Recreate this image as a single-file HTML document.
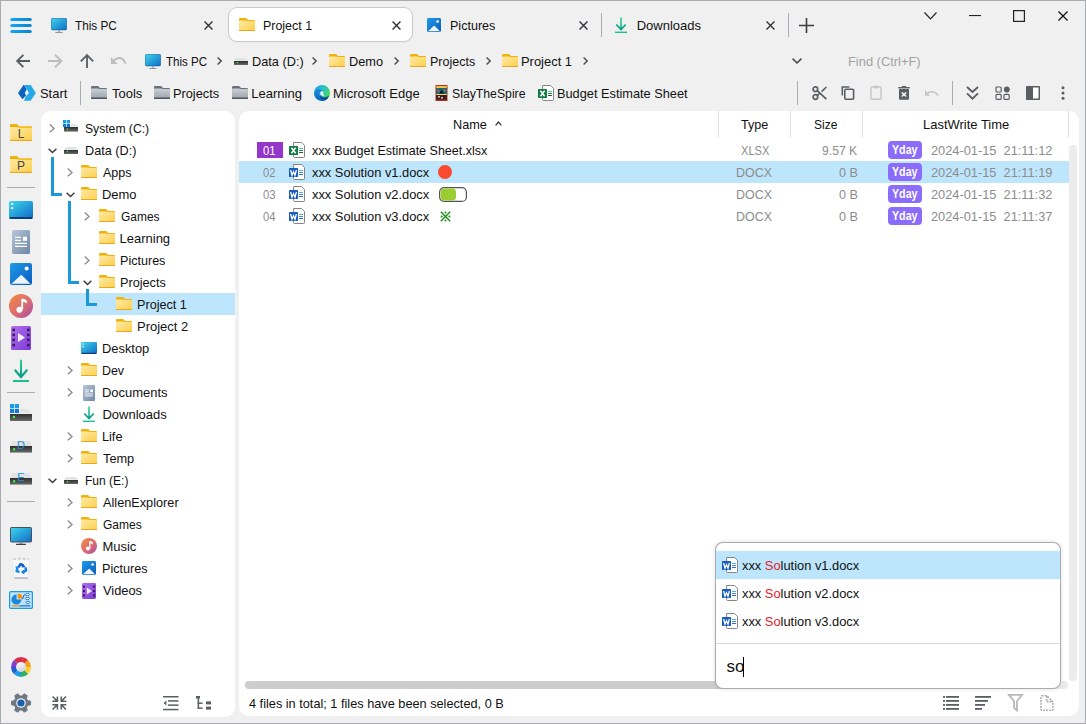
<!DOCTYPE html><html><head><meta charset="utf-8"><style>

*{box-sizing:border-box}
html,body{margin:0;padding:0}
body{width:1086px;height:724px;overflow:hidden;position:relative;background:#f0f0f0;font-family:"Liberation Sans", sans-serif;font-size:13px;color:#111}
.ab{position:absolute}
.t{position:absolute;white-space:nowrap;line-height:15px;height:15px;transform-origin:0 0}
svg{position:absolute;overflow:visible}
#frame{position:absolute;left:0;top:0;width:1086px;height:724px;border:1px solid #a9abae;pointer-events:none;z-index:50}
.panel{position:absolute;background:#fff;border-radius:10px}

</style></head><body>
<div id="frame"></div>

<svg width="0" height="0" style="position:absolute;left:0;top:0">
<defs>
<linearGradient id="gWh" x1="0" y1="0" x2="0.4" y2="1"><stop offset="0" stop-color="#fbfbfb"/><stop offset="1" stop-color="#d4d6da"/></linearGradient>
<linearGradient id="gBlue" x1="0" y1="0" x2="1" y2="1"><stop offset="0" stop-color="#3fd6ee"/><stop offset="1" stop-color="#0f6cc6"/></linearGradient>
<linearGradient id="gHam" x1="0" y1="0" x2="1" y2="0"><stop offset="0" stop-color="#12a6f6"/><stop offset="1" stop-color="#0a82d2"/></linearGradient>
<linearGradient id="gFold" x1="0" y1="0" x2="1" y2="1"><stop offset="0" stop-color="#ffe9a6"/><stop offset="1" stop-color="#fcd04c"/></linearGradient>
<linearGradient id="gFoldG" x1="0" y1="0" x2="0" y2="1"><stop offset="0" stop-color="#c9cfd6"/><stop offset="1" stop-color="#9aa2ab"/></linearGradient>
<linearGradient id="gPic" x1="0" y1="0" x2="1" y2="1"><stop offset="0" stop-color="#1f9ae8"/><stop offset="1" stop-color="#0a5cbf"/></linearGradient>
<linearGradient id="gDl" x1="0" y1="0" x2="0" y2="1"><stop offset="0" stop-color="#2ccf8e"/><stop offset="1" stop-color="#0c9c8e"/></linearGradient>
<linearGradient id="gDrv" x1="0" y1="0" x2="0" y2="1"><stop offset="0" stop-color="#2e2e2e"/><stop offset="1" stop-color="#6a6a6a"/></linearGradient>
<linearGradient id="gDoc" x1="0" y1="0" x2="1" y2="1"><stop offset="0" stop-color="#b9c7d8"/><stop offset="1" stop-color="#6b86a6"/></linearGradient>
<linearGradient id="gMus" x1="0" y1="0" x2="1" y2="1"><stop offset="0" stop-color="#f68a3c"/><stop offset=".6" stop-color="#d86a78"/><stop offset="1" stop-color="#a24aa8"/></linearGradient>
<linearGradient id="gVid" x1="0" y1="0" x2="1" y2="1"><stop offset="0" stop-color="#b070ec"/><stop offset="1" stop-color="#7c3ad6"/></linearGradient>
<linearGradient id="gEdge1" x1="0" y1="0.2" x2="1" y2="0.7"><stop offset="0" stop-color="#1e9ee6"/><stop offset=".5" stop-color="#2cc2c0"/><stop offset="1" stop-color="#4fdc4c"/></linearGradient>
<linearGradient id="gEdge2" x1="0" y1="0" x2="0.6" y2="1"><stop offset="0" stop-color="#1a8ee4"/><stop offset="1" stop-color="#0c5cc0"/></linearGradient>

<symbol id="fold" viewBox="0 0 16 13">
 <path d="M0,1.2 Q0,0 1.2,0 H6.6 Q7.3,0 7.8,0.6 L9,2 H14.8 Q16,2 16,3.2 V5 H0 Z" fill="#f0b20a"/>
 <path d="M0,3.2 Q0,2.4 0.8,2.4 H7.2 L8.6,3 H15 Q16,3 16,4 V11.8 Q16,13 14.8,13 H1.2 Q0,13 0,11.8 Z" fill="url(#gFold)"/>
 <rect x="0" y="11.9" width="16" height="1.1" rx=".5" fill="#eaa820"/>
</symbol>
<symbol id="foldS" viewBox="0 0 22 17">
 <path d="M0,1.4 Q0,0 1.4,0 H6.4 Q7.2,0 7.8,0.7 L9,2.2 H20.6 Q22,2.2 22,3.6 V6 H0 Z" fill="#f0b20a"/>
 <path d="M0,4 Q0,3 1,3 H7.6 L9,3.8 H21 Q22,3.8 22,4.8 V15.6 Q22,17 20.6,17 H1.4 Q0,17 0,15.6 Z" fill="url(#gFold)"/>
 <rect x="0" y="15.8" width="22" height="1.2" rx=".6" fill="#eaa820"/>
</symbol>
<symbol id="vids" viewBox="0 0 14 16">
 <rect x="0" y="0" width="14" height="16" rx="1.4" fill="url(#gVid)"/>
 <g fill="#3e1a5e"><rect x="1" y="2.6" width="2" height="2"/><rect x="1" y="7" width="2" height="2"/><rect x="1" y="11.4" width="2" height="2"/>
 <rect x="11" y="2.6" width="2" height="2"/><rect x="11" y="7" width="2" height="2"/><rect x="11" y="11.4" width="2" height="2"/></g>
 <path d="M4.8,4.6 L10,8 L4.8,11.4 Z" fill="#f0ecf6"/>
</symbol>
<symbol id="foldg" viewBox="0 0 16 13">
 <path d="M0,1.2 Q0,0 1.2,0 H6.6 Q7.3,0 7.8,0.6 L9,2 H14.8 Q16,2 16,3.2 V5 H0 Z" fill="#6c7178"/>
 <path d="M0,3.2 Q0,2.4 0.8,2.4 H7.2 L8.6,3 H15 Q16,3 16,4 V11.8 Q16,13 14.8,13 H1.2 Q0,13 0,11.8 Z" fill="url(#gFoldG)"/>
 <rect x="0" y="11.6" width="16" height="1.4" rx=".6" fill="#50555b"/>
</symbol>
<symbol id="mon" viewBox="0 0 16 15">
 <rect x="0.3" y="0.3" width="15.4" height="11.6" rx="1.3" fill="url(#gBlue)" stroke="#0b5b98" stroke-width=".6"/>
 <rect x="7.2" y="12" width="1.6" height="2" fill="#9aa4ad"/>
 <rect x="4.2" y="14" width="7.6" height="1" rx=".4" fill="#8c96a0"/>
</symbol>
<symbol id="mon2" viewBox="0 0 22 18">
 <rect x="0.5" y="0.5" width="21" height="14.5" rx="0.8" fill="url(#gBlue)" stroke="#4a5058" stroke-width="1"/>
 <rect x="9.4" y="15" width="3.2" height="1.8" fill="#8a949e"/>
 <rect x="6" y="16.7" width="10" height="1.3" rx=".5" fill="#3c4248"/>
</symbol>
<symbol id="pic" viewBox="0 0 14 14">
 <rect x="0" y="0" width="14" height="14" rx="1.4" fill="url(#gPic)"/>
 <path d="M1,13.2 L7.2,7.4 L13,13.2 Z" fill="#eef6ff"/>
 <circle cx="10.6" cy="3.5" r="1.3" fill="#fff"/>
</symbol>
<symbol id="dl" viewBox="0 0 14 16" preserveAspectRatio="none">
 <path d="M7,0.5 V12.5 M1.5,7.5 L7,12.5 L12.5,7.5" fill="none" stroke="url(#gDl)" stroke-width="1.8"/>
 <rect x="0" y="14.6" width="14" height="1.6" fill="#1ec092"/>
</symbol>
<symbol id="xx" viewBox="0 0 10 10">
 <path d="M0.6,0.6 L9.4,9.4 M9.4,0.6 L0.6,9.4" stroke="#2b2f33" stroke-width="1.5" fill="none"/>
</symbol>
<symbol id="drv" viewBox="0 0 14 7">
 <path d="M2,0 H12 L14,2.8 H0 Z" fill="#dfe2e6"/>
 <rect x="0" y="3" width="14" height="4" fill="url(#gDrv)"/>
 <circle cx="3.4" cy="4.6" r=".8" fill="#3af03a"/>
</symbol>
<symbol id="winlogo" viewBox="0 0 7 7">
 <rect x="0" y="0" width="3.2" height="3.2" fill="#1a9be8"/><rect x="3.8" y="0" width="3.2" height="3.2" fill="#1a9be8"/>
 <rect x="0" y="3.8" width="3.2" height="3.2" fill="#0f82de"/><rect x="3.8" y="3.8" width="3.2" height="3.2" fill="#0f76d8"/>
</symbol>
<symbol id="start" viewBox="0 0 18 16">
 <path d="M5.5,0 H6 L8.7,4.4 L6.8,7.7 L8,10.4 L4.4,14.2 L0,7.9 Z" fill="#0a63c0"/>
 <path d="M6,0 H12.7 L17.9,7.9 L12.7,15.8 H6 L8,10.5 Q8.8,10.6 9.4,10 L10.9,7.7 L9.2,5 Q9,4.6 8.7,4.4 Z" fill="#26a9e8"/>
</symbol>
<symbol id="edge" viewBox="0 0 16 16">
 <circle cx="8" cy="8" r="8" fill="url(#gEdge1)"/>
 <path d="M0.1,8.8 Q0.6,5 4.4,4.2 Q7.4,3.8 8.6,6.2 Q6.6,5.6 5.6,7.4 Q4.6,9.6 6.4,12 Q8.6,14.4 12.4,13.6 Q13.6,13.3 14.6,12.4 A8,8 0 0 1 0.1,8.8 Z" fill="url(#gEdge2)"/>
 <path d="M5.8,9.6 Q6.8,12.4 10.4,12.4 Q13.6,12.4 15.2,10.6 Q14.6,12.6 12.6,13.8 Q8.8,15.2 6.6,12.8 Q5.6,11.4 5.8,9.6 Z" fill="#0a3e96"/>
 <path d="M6.4,7.4 Q7.4,5.8 8.8,6.4 Q9.6,7 9.2,8.4 Q9,10 10.6,10.6 Q8,11.2 6.8,9.8 Q6,8.6 6.4,7.4 Z" fill="#f2f6f4"/>
</symbol>
<symbol id="spire" viewBox="0 0 13 16">
 <rect x="0.5" y="0" width="12" height="16" rx=".6" fill="#a8301e"/>
 <rect x="1.3" y="1" width="10.5" height="2.2" fill="#f7c14a"/>
 <rect x="1.3" y="3" width="10.5" height="6" fill="#0e6f68"/>
 <path d="M2,4 L5,6 L3,8 Z M8,3.5 L11,5 L10,7 Z" fill="#e5458f"/>
 <path d="M4.5,8.6 L6.5,4.8 L8.8,8.6 Z" fill="#111"/>
 <rect x="1.3" y="9" width="10.5" height="1" fill="#f3d46a"/>
 <rect x="1.3" y="10" width="10.5" height="4.6" fill="#3a1e1e"/>
 <circle cx="4" cy="11.8" r=".9" fill="#fff"/><circle cx="7" cy="12.8" r=".9" fill="#fff"/>
 <rect x="0" y="2.2" width="0.8" height="1.4" fill="#c8902a"/><rect x="12.2" y="2.2" width="0.8" height="1.4" fill="#c8902a"/>
</symbol>
<symbol id="xl" viewBox="0 0 16 16">
 <path d="M4.6,0.5 H12.6 L15.5,3.4 V14.6 Q15.5,15.5 14.6,15.5 H5.5 Q4.6,15.5 4.6,14.6 Z" fill="#fff" stroke="#777" stroke-width=".9"/>
 <rect x="0" y="4" width="9" height="9" rx=".4" fill="#107c41"/>
 <path d="M2.4,5.8 L6.6,11.2 M6.6,5.8 L2.4,11.2" stroke="#fff" stroke-width="1.5"/>
 <rect x="10" y="6" width="4" height=".9" fill="#33c481"/><rect x="10" y="8.1" width="4" height=".9" fill="#107c41"/><rect x="10" y="10.1" width="4" height=".9" fill="#0a4a26"/>
</symbol>
<symbol id="wd" viewBox="0 0 16 16">
 <path d="M4.6,0.5 H12.6 L15.5,3.4 V14.6 Q15.5,15.5 14.6,15.5 H5.5 Q4.6,15.5 4.6,14.6 Z" fill="#fff" stroke="#777" stroke-width=".9"/>
 <rect x="0" y="4" width="9" height="9" rx=".4" fill="#185abd"/>
 <path d="M1.6,6 L3,11.2 L4.5,7.6 L6,11.2 L7.4,6" stroke="#fff" stroke-width="1.3" fill="none"/>
 <rect x="10" y="6" width="4" height=".9" fill="#41a5ee"/><rect x="10" y="8.1" width="4" height=".9" fill="#2b7cd3"/><rect x="10" y="10.1" width="4" height=".9" fill="#185abd"/>
</symbol>
<symbol id="desk" viewBox="0 0 24 18">
 <rect x="0" y="0" width="24" height="17" rx="1.6" fill="url(#gBlue)"/>
 <rect x="0.5" y="16" width="23" height="2" rx=".6" fill="#0a3f7a"/>
 <rect x="2.2" y="2.2" width="2" height="1.8" fill="#fff"/><rect x="2.2" y="6.2" width="2" height="1.8" fill="#fff"/>
</symbol>
<symbol id="docs" viewBox="0 0 18 24">
 <rect x="0" y="0" width="18" height="24" rx="1.6" fill="url(#gDoc)"/>
 <path d="M3,7.4 H9 M3,10.3 H9 M3,13.4 H15 M3,16.4 H15" stroke="#fff" stroke-width="1.3"/>
 <rect x="11" y="6.8" width="4" height="4" fill="#fff"/>
</symbol>
<symbol id="music" viewBox="0 0 24 24">
 <circle cx="12" cy="12" r="12" fill="url(#gMus)"/>
 <path d="M13.2,5 V15.6" stroke="#fff" stroke-width="1.8"/>
 <circle cx="10.4" cy="15.8" r="3" fill="#fff"/>
 <path d="M13.2,4.6 Q16.2,5 17.8,6.8 V9.6 Q16,8 13.2,7.8 Z" fill="#fff"/>
</symbol>
<symbol id="vid" viewBox="0 0 20 24">
 <rect x="0" y="0" width="20" height="24" rx="1.6" fill="url(#gVid)"/>
 <g fill="#3e1a5e"><rect x="1.4" y="2.6" width="2.6" height="2.6"/><rect x="1.4" y="7.6" width="2.6" height="2.6"/><rect x="1.4" y="12.6" width="2.6" height="2.6"/><rect x="1.4" y="17.8" width="2.6" height="2.6"/>
 <rect x="16" y="2.6" width="2.6" height="2.6"/><rect x="16" y="7.6" width="2.6" height="2.6"/><rect x="16" y="12.6" width="2.6" height="2.6"/><rect x="16" y="17.8" width="2.6" height="2.6"/></g>
 <path d="M7,7 L14,11.4 L7,16 Z" fill="#f4f0fa"/>
</symbol>
<symbol id="ring" viewBox="0 0 20 20">
 <g transform="translate(10,10)">
 <path d="M0,-10 A10,10 0 0 1 7.07,-7.07 L0,0 Z" fill="#e5334a"/>
 <path d="M7.07,-7.07 A10,10 0 0 1 10,0 L0,0 Z" fill="#f7a01c"/>
 <path d="M10,0 A10,10 0 0 1 7.07,7.07 L0,0 Z" fill="#fcd030"/>
 <path d="M7.07,7.07 A10,10 0 0 1 0,10 L0,0 Z" fill="#2fb060"/>
 <path d="M0,10 A10,10 0 0 1 -7.07,7.07 L0,0 Z" fill="#1e9ae8"/>
 <path d="M-7.07,7.07 A10,10 0 0 1 -10,0 L0,0 Z" fill="#1f5fd0"/>
 <path d="M-10,0 A10,10 0 0 1 -7.07,-7.07 L0,0 Z" fill="#8a3ad0"/>
 <path d="M-7.07,-7.07 A10,10 0 0 1 0,-10 L0,0 Z" fill="#d0304a"/>
 <circle r="5" fill="url(#gWh)"/>
 </g>
</symbol>
<symbol id="gear" viewBox="0 0 20 20">
 <g transform="translate(10,10) rotate(30)" fill="#6f7883">
  <circle r="7.4"/>
  <path id="tooth" d="M-3,-6 L-2.2,-9.6 Q-2,-10 -1.6,-10 H1.6 Q2,-10 2.2,-9.6 L3,-6 Z"/>
  <path d="M-3,-6 L-2.2,-9.6 Q-2,-10 -1.6,-10 H1.6 Q2,-10 2.2,-9.6 L3,-6 Z" transform="rotate(60)"/>
  <path d="M-3,-6 L-2.2,-9.6 Q-2,-10 -1.6,-10 H1.6 Q2,-10 2.2,-9.6 L3,-6 Z" transform="rotate(120)"/>
  <path d="M-3,-6 L-2.2,-9.6 Q-2,-10 -1.6,-10 H1.6 Q2,-10 2.2,-9.6 L3,-6 Z" transform="rotate(180)"/>
  <path d="M-3,-6 L-2.2,-9.6 Q-2,-10 -1.6,-10 H1.6 Q2,-10 2.2,-9.6 L3,-6 Z" transform="rotate(240)"/>
  <path d="M-3,-6 L-2.2,-9.6 Q-2,-10 -1.6,-10 H1.6 Q2,-10 2.2,-9.6 L3,-6 Z" transform="rotate(300)"/>
 </g>
 <circle cx="10" cy="10" r="4.8" fill="#f2f2f2"/><circle cx="10" cy="10" r="3.6" fill="#1d5fae"/>
</symbol>
<symbol id="recyc" viewBox="0 0 18 22">
 <path d="M0.6,4 H17.4 L15.8,21.6 H2.2 Z" fill="#f7f9fb" stroke="#dde2e7" stroke-width=".6"/>
 <rect x="0.4" y="3.4" width="17.2" height="1.2" fill="#fff"/>
 <path d="M1.4,2 H4 M6,1.6 H8.6 M10.6,1.8 H14 M15.8,2.2 H17" stroke="#c4ccd4" stroke-width="1.6"/>
 <rect x="2.4" y="20.2" width="13.2" height="1.6" rx=".6" fill="#aab2ba"/>
 <g fill="none" stroke-width="2.5" stroke-linejoin="round">
  <path d="M6.4,10.4 L8.6,7 L11.4,8.6" stroke="#0d63c8"/>
  <path d="M13.6,10.4 L14,13.6 L11,15" stroke="#1580e0"/>
  <path d="M7.4,15.2 L4.6,14 L5.4,10.8" stroke="#1a8ae8"/>
 </g>
 <path d="M10.6,6.6 L13.8,10.2 L9.6,10.6 Z" fill="#0d63c8"/>
 <path d="M12.4,17.4 L8.8,15 L12.2,12.8 Z" fill="#1580e0"/>
 <path d="M3.2,9.4 L7.4,9.6 L4.8,13 Z" fill="#1a8ae8"/>
</symbol>
<symbol id="cpl" viewBox="0 0 24 18">
 <rect x="0.6" y="0.6" width="22.8" height="16.8" rx="1.2" fill="#bfe3fa" stroke="#1a9ae6" stroke-width="1.2"/>
 <path d="M7.6,3.6 V8.6 H12.4 A5,5 0 1 1 7.6,3.6 Z" fill="#1a88de"/>
 <path d="M8.8,2.6 A5,5 0 0 1 13.6,7.4 H8.8 Z" fill="#f59000"/>
 <path d="M12.6,8 Q14.4,8 14.4,6 Q14.4,3.6 16.2,3.6" fill="none" stroke="#0e5cb8" stroke-width=".9"/>
 <g fill="#fff" stroke="#1a70d0" stroke-width=".9"><ellipse cx="18.4" cy="3.6" rx="2.1" ry="1.1"/><ellipse cx="18.4" cy="7.5" rx="2.1" ry="1.1"/><ellipse cx="18.8" cy="11.4" rx="2.1" ry="1.1"/></g>
 <rect x="3" y="14.2" width="7.6" height="1.2" fill="#f59000"/><rect x="10.6" y="14.2" width="10.8" height="1.2" fill="#1a70d0"/>
</symbol>
</defs>
</svg>

<div class="ab" style="left:229px;top:8px;width:183px;height:33px;background:#fff;border-radius:8px;box-shadow:0 0 0 1px #c9c9c9,0 1px 2px rgba(0,0,0,.10)"></div>
<div class="t" style="left:75.00px;top:18.00px;transform:scaleX(0.9043);">This PC</div>
<div class="t" style="left:262.84px;top:18.00px;transform:scaleX(0.9560);">Project 1</div>
<div class="t" style="left:449.73px;top:18.00px;transform:scaleX(0.9652);">Pictures</div>
<div class="t" style="left:636.70px;top:18.00px;">Downloads</div>
<div class="ab" style="left:601px;top:13px;width:1px;height:24px;background:#a9adb3"></div>
<div class="ab" style="left:788px;top:13px;width:1px;height:24px;background:#a9adb3"></div>
<svg style="left:10px;top:18px;width:22px;height:15px" viewBox="0 0 22 15"><g fill="url(#gHam)"><rect x="0.3" y="0" width="21.4" height="3" rx="1.5"/><rect x="0.3" y="6" width="21.4" height="3" rx="1.5"/><rect x="0.3" y="12" width="21.4" height="3" rx="1.5"/></g></svg>
<svg style="left:51px;top:18px;width:16px;height:15px;"><use href="#mon"/></svg>
<svg style="left:239px;top:18px;width:16px;height:13px;"><use href="#fold"/></svg>
<svg style="left:427px;top:18px;width:14px;height:14px;"><use href="#pic"/></svg>
<svg style="left:615px;top:17px;width:12px;height:16px;"><use href="#dl"/></svg>
<svg style="left:203.5px;top:20.5px;width:9px;height:9px;"><use href="#xx"/></svg>
<svg style="left:391.5px;top:20.5px;width:9px;height:9px;"><use href="#xx"/></svg>
<svg style="left:578.5px;top:20.5px;width:9px;height:9px;"><use href="#xx"/></svg>
<svg style="left:765.5px;top:20.5px;width:9px;height:9px;"><use href="#xx"/></svg>
<svg style="left:799px;top:18px;width:15px;height:15px" viewBox="0 0 15 15"><path d="M7.5,0 V15 M0,7.5 H15" stroke="#3a3e42" stroke-width="1.6"/></svg>
<svg style="left:924px;top:12px;width:13px;height:8px" viewBox="0 0 13 8"><path d="M0.5,0.5 L6.5,6.8 L12.5,0.5" fill="none" stroke="#222" stroke-width="1.2"/></svg>
<svg style="left:969px;top:15px;width:12px;height:1px" viewBox="0 0 12 1"><rect x="0" y="0" width="12" height="1.1" fill="#222"/></svg>
<svg style="left:1013px;top:10px;width:12px;height:12px" viewBox="0 0 12 12"><rect x="0.6" y="0.6" width="10.8" height="10.8" fill="none" stroke="#222" stroke-width="1.2"/></svg>
<svg style="left:1058px;top:11px;width:10px;height:10px" viewBox="0 0 10 10"><path d="M0.5,0.5 L9.5,9.5 M9.5,0.5 L0.5,9.5" stroke="#111" stroke-width="1.3"/></svg>
<div class="t" style="left:165.70px;top:54.00px;transform:scaleX(0.8891);">This PC</div>
<div class="t" style="left:252.02px;top:54.00px;transform:scaleX(0.9804);">Data (D:)</div>
<div class="t" style="left:348.62px;top:54.00px;transform:scaleX(0.9824);">Demo</div>
<div class="t" style="left:429.74px;top:54.00px;transform:scaleX(0.9630);">Projects</div>
<div class="t" style="left:521.01px;top:54.00px;transform:scaleX(0.9940);">Project 1</div>
<div class="t" style="left:848.01px;top:54.00px;color:#a2a2a2;transform:scaleX(0.9903);">Find (Ctrl+F)</div>
<svg style="left:16px;top:54px;width:15px;height:14px" viewBox="0 0 15 14"><path d="M1,7 H14 M7.4,0.8 L1.2,7 L7.4,13.2" fill="none" stroke="#5a5e63" stroke-width="1.9"/></svg>
<svg style="left:47px;top:54px;width:16px;height:14px" viewBox="0 0 16 14"><path d="M1,7 H14.6 M8,0.8 L14.4,7 L8,13.2" fill="none" stroke="#bdbdbd" stroke-width="1.9"/></svg>
<svg style="left:80px;top:54px;width:14px;height:14px" viewBox="0 0 14 14"><path d="M7,1.4 V14 M0.8,7.4 L7,1.2 L13.2,7.4" fill="none" stroke="#5d6166" stroke-width="1.9"/></svg>
<svg style="left:110px;top:56px;width:17px;height:9px" viewBox="0 0 17 9"><path d="M1,1 V8 H7.6 Z" fill="#bdbdbd"/><path d="M3.2,5.4 Q6,1.8 9.6,2 Q13.6,2.3 15.6,7.8" fill="none" stroke="#bdbdbd" stroke-width="1.9"/></svg>
<svg style="left:145px;top:54px;width:16px;height:15px;"><use href="#mon"/></svg>
<svg style="left:234px;top:58px;width:14px;height:7px;"><use href="#drv"/></svg>
<svg style="left:329px;top:54px;width:16px;height:13px;"><use href="#fold"/></svg>
<svg style="left:410px;top:54px;width:16px;height:13px;"><use href="#fold"/></svg>
<svg style="left:502px;top:54px;width:16px;height:13px;"><use href="#fold"/></svg>
<svg style="left:217px;top:57px;width:5px;height:8px" viewBox="0 0 5 8"><path d="M0.6,0.6 L4.2,4 L0.6,7.4" fill="none" stroke="#45494e" stroke-width="1.4"/></svg>
<svg style="left:312px;top:57px;width:5px;height:8px" viewBox="0 0 5 8"><path d="M0.6,0.6 L4.2,4 L0.6,7.4" fill="none" stroke="#45494e" stroke-width="1.4"/></svg>
<svg style="left:394px;top:57px;width:5px;height:8px" viewBox="0 0 5 8"><path d="M0.6,0.6 L4.2,4 L0.6,7.4" fill="none" stroke="#45494e" stroke-width="1.4"/></svg>
<svg style="left:486px;top:57px;width:5px;height:8px" viewBox="0 0 5 8"><path d="M0.6,0.6 L4.2,4 L0.6,7.4" fill="none" stroke="#45494e" stroke-width="1.4"/></svg>
<svg style="left:583px;top:57px;width:5px;height:8px" viewBox="0 0 5 8"><path d="M0.6,0.6 L4.2,4 L0.6,7.4" fill="none" stroke="#45494e" stroke-width="1.4"/></svg>
<svg style="left:792px;top:58px;width:10px;height:6px" viewBox="0 0 10 6"><path d="M0.6,0.6 L5,5 L9.4,0.6" fill="none" stroke="#45494e" stroke-width="1.5"/></svg>
<div class="t" style="left:40.21px;top:86.00px;transform:scaleX(0.9930);">Start</div>
<div class="t" style="left:111.60px;top:86.00px;transform:scaleX(0.9970);">Tools</div>
<div class="t" style="left:173.22px;top:86.00px;transform:scaleX(0.9804);">Projects</div>
<div class="t" style="left:251.30px;top:86.00px;">Learning</div>
<div class="t" style="left:333.00px;top:86.00px;">Microsoft Edge</div>
<div class="t" style="left:452.46px;top:86.00px;transform:scaleX(0.9416);">SlayTheSpire</div>
<div class="t" style="left:557.02px;top:86.00px;transform:scaleX(0.9818);">Budget Estimate Sheet</div>
<div class="ab" style="left:80px;top:81px;width:1px;height:24px;background:#a9adb3"></div>
<div class="ab" style="left:797px;top:81px;width:1px;height:24px;background:#a9adb3"></div>
<div class="ab" style="left:952px;top:81px;width:1px;height:24px;background:#a9adb3"></div>
<svg style="left:18px;top:85px;width:18px;height:16px;"><use href="#start"/></svg>
<svg style="left:91px;top:86px;width:16px;height:13px;"><use href="#foldg"/></svg>
<svg style="left:154px;top:86px;width:16px;height:13px;"><use href="#foldg"/></svg>
<svg style="left:232px;top:86px;width:16px;height:13px;"><use href="#foldg"/></svg>
<svg style="left:314px;top:85px;width:16px;height:16px;"><use href="#edge"/></svg>
<svg style="left:435px;top:85px;width:13px;height:16px;"><use href="#spire"/></svg>
<svg style="left:538px;top:85px;width:16px;height:16px;"><use href="#xl"/></svg>
<svg style="left:812px;top:86px;width:15px;height:14px" viewBox="0 0 15 14"><g fill="none" stroke="#5a5e63" stroke-width="1.7"><circle cx="3.4" cy="3.2" r="2.3"/><circle cx="3.4" cy="11" r="2.3"/><path d="M5.2,4.6 L14.4,13.2 M5.2,9.6 L8,7 M9.6,5.6 L14.4,1"/></g></svg>
<svg style="left:841px;top:86px;width:14px;height:14px" viewBox="0 0 14 14"><g fill="none" stroke="#5a5e63" stroke-width="1.6"><path d="M1.3,9.6 V1 H8.4"/><rect x="3.8" y="3.2" width="8.8" height="10" rx="1"/></g></svg>
<svg style="left:870px;top:85px;width:12px;height:15px" viewBox="0 0 12 15"><g fill="none" stroke="#c6c6c6" stroke-width="1.5"><rect x="1" y="2" width="10" height="12.2" rx="1"/></g><rect x="4" y="0.4" width="4" height="3" rx="1" fill="#c6c6c6"/></svg>
<svg style="left:898px;top:86px;width:12px;height:14px" viewBox="0 0 12 14"><path d="M0.2,1.7 H11.8" stroke="#5a5e63" stroke-width="1.4"/><rect x="4" y="0" width="4" height="1.5" fill="#5a5e63"/><path d="M1,3 H11 V12.8 Q11,13.8 10,13.8 H2 Q1,13.8 1,12.8 Z" fill="#5a5e63"/><path d="M3.8,6.4 L8.2,10.6 M8.2,6.4 L3.8,10.6" stroke="#fff" stroke-width="1.4"/></svg>
<svg style="left:924px;top:90px;width:15px;height:6px" viewBox="0 0 15 6"><path d="M1,0 V5.8 H6 Z" fill="#c6c6c6"/><path d="M2.6,4 Q5,1.6 8,1.8 Q12,2 14,5.6" fill="none" stroke="#c6c6c6" stroke-width="1.6"/></svg>
<svg style="left:966px;top:86px;width:13px;height:14px" viewBox="0 0 13 14"><path d="M1,1 L6.5,6 L12,1 M1,7.4 L6.5,12.6 L12,7.4" fill="none" stroke="#5a5e63" stroke-width="1.9"/></svg>
<svg style="left:995px;top:86px;width:15px;height:14px" viewBox="0 0 15 14"><g fill="none" stroke="#5a5e63" stroke-width="1.2"><rect x="1" y="1" width="5.2" height="5" rx="1"/><rect x="1" y="8.4" width="5.2" height="5" rx="1"/><rect x="9" y="8.4" width="5.2" height="5" rx="1"/></g><circle cx="11.8" cy="3.5" r="2.9" fill="#5a5e63"/></svg>
<svg style="left:1026px;top:86px;width:14px;height:14px" viewBox="0 0 14 14"><rect x="0" y="0" width="14" height="14" rx=".8" fill="#5a5e63"/><rect x="7" y="1.5" width="5.5" height="11" fill="#fff"/></svg>
<svg style="left:1061px;top:86px;width:4px;height:14px" viewBox="0 0 4 14"><g fill="#5a5e63"><circle cx="2" cy="1.8" r="1.5"/><circle cx="2" cy="7" r="1.5"/><circle cx="2" cy="12.3" r="1.5"/></g></svg>
<svg style="left:10px;top:124px;width:22px;height:17px;"><use href="#foldS"/></svg>
<div class="t" style="left:10px;top:127px;width:22px;text-align:center;font-size:12px;color:#444;line-height:15px">L</div>
<svg style="left:10px;top:156px;width:22px;height:17px;"><use href="#foldS"/></svg>
<div class="t" style="left:10px;top:159px;width:22px;text-align:center;font-size:12px;color:#444;line-height:15px">P</div>
<div class="ab" style="left:7px;top:187px;width:28px;height:1px;background:#a9acb1"></div>
<div class="ab" style="left:7px;top:392px;width:28px;height:1px;background:#a9acb1"></div>
<div class="ab" style="left:7px;top:501px;width:28px;height:1px;background:#a9acb1"></div>
<svg style="left:9px;top:201px;width:24px;height:18px;"><use href="#desk"/></svg>
<svg style="left:12px;top:230px;width:18px;height:24px;"><use href="#docs"/></svg>
<svg style="left:10px;top:263px;width:22px;height:22px;"><use href="#pic"/></svg>
<svg style="left:9px;top:294px;width:24px;height:24px;"><use href="#music"/></svg>
<svg style="left:11px;top:326px;width:20px;height:24px;"><use href="#vid"/></svg>
<svg style="left:13px;top:359px;width:16px;height:23px;"><use href="#dl"/></svg>
<svg style="left:10px;top:404px;width:9px;height:9px;"><use href="#winlogo"/></svg>
<svg style="left:10px;top:409px;width:22px;height:12px" viewBox="0 0 22 12"><path d="M10,0 H17.5 L21.8,3.8 H10 Z" fill="#dfe2e6"/><rect x="0" y="5" width="22" height="7" fill="url(#gDrv)"/><rect x="2.8" y="6.8" width="2.3" height="2.3" fill="#3af03a"/></svg>
<svg style="left:10px;top:441px;width:22px;height:12px" viewBox="0 0 22 12"><path d="M2.2,0 H19.6 L22,5 H0 Z" fill="#dfe2e6"/><rect x="0" y="5" width="22" height="6.6" fill="url(#gDrv)"/><rect x="3" y="7.2" width="2.2" height="2.2" fill="#3af03a"/></svg>
<div class="t" style="left:15px;top:438px;width:12px;text-align:center;font-size:11px;color:#1e90d8;line-height:15px">D</div>
<svg style="left:10px;top:473px;width:22px;height:12px" viewBox="0 0 22 12"><path d="M2.2,0 H19.6 L22,5 H0 Z" fill="#dfe2e6"/><rect x="0" y="5" width="22" height="6.6" fill="url(#gDrv)"/><rect x="3" y="7.2" width="2.2" height="2.2" fill="#3af03a"/></svg>
<div class="t" style="left:15px;top:470px;width:12px;text-align:center;font-size:11px;color:#1e90d8;line-height:15px">E</div>
<svg style="left:10px;top:527px;width:22px;height:18px;"><use href="#mon2"/></svg>
<svg style="left:12px;top:557px;width:18px;height:22px;"><use href="#recyc"/></svg>
<svg style="left:9px;top:591px;width:24px;height:18px;"><use href="#cpl"/></svg>
<svg style="left:11px;top:657px;width:20px;height:20px;"><use href="#ring"/></svg>
<svg style="left:11px;top:693px;width:20px;height:20px;"><use href="#gear"/></svg>
<div class="panel" style="left:41px;top:111px;width:194px;height:606px"></div>
<div class="ab" style="left:41px;top:293px;width:194px;height:22px;background:#bde6fc"></div>
<div class="t" style="left:84.67px;top:121.00px;transform:scaleX(0.9343);">System (C:)</div>
<svg style="left:49.2px;top:124px;width:6px;height:9px" viewBox="0 0 6 9"><path d="M0.8,0.6 L5,4.4 L0.8,8.2" fill="none" stroke="#8a8a8a" stroke-width="1.3"/></svg>
<svg style="left:63px;top:120px;width:7px;height:7px;"><use href="#winlogo"/></svg>
<svg style="left:64px;top:124px;width:14px;height:8px" viewBox="0 0 14 8"><path d="M7,0 H12 L14,2.4 H7 Z" fill="#dfe2e6"/><rect x="0" y="3" width="14" height="4.6" fill="url(#gDrv)"/><circle cx="3.4" cy="5" r=".8" fill="#3af03a"/></svg>
<div class="t" style="left:84.63px;top:143.00px;transform:scaleX(0.9745);">Data (D:)</div>
<svg style="left:48.2px;top:148px;width:9px;height:6px" viewBox="0 0 9 6"><path d="M0.6,0.8 L4.5,4.6 L8.4,0.8" fill="none" stroke="#3a3a3a" stroke-width="1.4"/></svg>
<svg style="left:64px;top:147px;width:14px;height:7px;"><use href="#drv"/></svg>
<div class="t" style="left:103.40px;top:165.00px;transform:scaleX(0.9600);">Apps</div>
<svg style="left:66.7px;top:168px;width:6px;height:9px" viewBox="0 0 6 9"><path d="M0.8,0.6 L5,4.4 L0.8,8.2" fill="none" stroke="#8a8a8a" stroke-width="1.3"/></svg>
<svg style="left:81.1px;top:165px;width:16px;height:13px;"><use href="#fold"/></svg>
<div class="t" style="left:102.40px;top:187.00px;transform:scaleX(0.9971);">Demo</div>
<svg style="left:65.7px;top:192px;width:9px;height:6px" viewBox="0 0 9 6"><path d="M0.6,0.8 L4.5,4.6 L8.4,0.8" fill="none" stroke="#3a3a3a" stroke-width="1.4"/></svg>
<svg style="left:81.1px;top:187px;width:16px;height:13px;"><use href="#fold"/></svg>
<div class="t" style="left:120.50px;top:209.00px;transform:scaleX(0.9190);">Games</div>
<svg style="left:84.2px;top:212px;width:6px;height:9px" viewBox="0 0 6 9"><path d="M0.8,0.6 L5,4.4 L0.8,8.2" fill="none" stroke="#8a8a8a" stroke-width="1.3"/></svg>
<svg style="left:98.6px;top:209px;width:16px;height:13px;"><use href="#fold"/></svg>
<div class="t" style="left:119.50px;top:231.00px;">Learning</div>
<svg style="left:98.6px;top:231px;width:16px;height:13px;"><use href="#fold"/></svg>
<div class="t" style="left:119.53px;top:253.00px;transform:scaleX(0.9670);">Pictures</div>
<svg style="left:84.2px;top:256px;width:6px;height:9px" viewBox="0 0 6 9"><path d="M0.8,0.6 L5,4.4 L0.8,8.2" fill="none" stroke="#8a8a8a" stroke-width="1.3"/></svg>
<svg style="left:98.6px;top:253px;width:16px;height:13px;"><use href="#fold"/></svg>
<div class="t" style="left:119.53px;top:275.00px;transform:scaleX(0.9740);">Projects</div>
<svg style="left:83.2px;top:280px;width:9px;height:6px" viewBox="0 0 9 6"><path d="M0.6,0.8 L4.5,4.6 L8.4,0.8" fill="none" stroke="#3a3a3a" stroke-width="1.4"/></svg>
<svg style="left:98.6px;top:275px;width:16px;height:13px;"><use href="#fold"/></svg>
<div class="t" style="left:137.33px;top:297.00px;transform:scaleX(0.9720);">Project 1</div>
<svg style="left:116.1px;top:297px;width:16px;height:13px;"><use href="#fold"/></svg>
<div class="t" style="left:137.30px;top:319.00px;transform:scaleX(0.9960);">Project 2</div>
<svg style="left:116.1px;top:319px;width:16px;height:13px;"><use href="#fold"/></svg>
<div class="t" style="left:102.41px;top:341.00px;transform:scaleX(0.9910);">Desktop</div>
<svg style="left:81px;top:342px;width:16px;height:12px;"><use href="#desk"/></svg>
<div class="t" style="left:102.45px;top:363.00px;transform:scaleX(0.9550);">Dev</div>
<svg style="left:66.7px;top:366px;width:6px;height:9px" viewBox="0 0 6 9"><path d="M0.8,0.6 L5,4.4 L0.8,8.2" fill="none" stroke="#8a8a8a" stroke-width="1.3"/></svg>
<svg style="left:81.1px;top:363px;width:16px;height:13px;"><use href="#fold"/></svg>
<div class="t" style="left:102.40px;top:385.00px;transform:scaleX(0.9970);">Documents</div>
<svg style="left:66.7px;top:388px;width:6px;height:9px" viewBox="0 0 6 9"><path d="M0.8,0.6 L5,4.4 L0.8,8.2" fill="none" stroke="#8a8a8a" stroke-width="1.3"/></svg>
<svg style="left:83px;top:385px;width:12px;height:16px;"><use href="#docs"/></svg>
<div class="t" style="left:102.40px;top:407.00px;">Downloads</div>
<svg style="left:83px;top:406px;width:12px;height:16px;"><use href="#dl"/></svg>
<div class="t" style="left:102.43px;top:429.00px;transform:scaleX(0.9750);">Life</div>
<svg style="left:66.7px;top:432px;width:6px;height:9px" viewBox="0 0 6 9"><path d="M0.8,0.6 L5,4.4 L0.8,8.2" fill="none" stroke="#8a8a8a" stroke-width="1.3"/></svg>
<svg style="left:81.1px;top:429px;width:16px;height:13px;"><use href="#fold"/></svg>
<div class="t" style="left:103.40px;top:451.00px;transform:scaleX(0.9810);">Temp</div>
<svg style="left:66.7px;top:454px;width:6px;height:9px" viewBox="0 0 6 9"><path d="M0.8,0.6 L5,4.4 L0.8,8.2" fill="none" stroke="#8a8a8a" stroke-width="1.3"/></svg>
<svg style="left:81.1px;top:451px;width:16px;height:13px;"><use href="#fold"/></svg>
<div class="t" style="left:84.68px;top:473.00px;transform:scaleX(0.9240);">Fun (E:)</div>
<svg style="left:48.2px;top:478px;width:9px;height:6px" viewBox="0 0 9 6"><path d="M0.6,0.8 L4.5,4.6 L8.4,0.8" fill="none" stroke="#3a3a3a" stroke-width="1.4"/></svg>
<svg style="left:64px;top:477px;width:14px;height:7px;"><use href="#drv"/></svg>
<div class="t" style="left:103.40px;top:495.00px;transform:scaleX(0.9780);">AllenExplorer</div>
<svg style="left:66.7px;top:498px;width:6px;height:9px" viewBox="0 0 6 9"><path d="M0.8,0.6 L5,4.4 L0.8,8.2" fill="none" stroke="#8a8a8a" stroke-width="1.3"/></svg>
<svg style="left:81.1px;top:495px;width:16px;height:13px;"><use href="#fold"/></svg>
<div class="t" style="left:103.40px;top:517.00px;transform:scaleX(0.9238);">Games</div>
<svg style="left:66.7px;top:520px;width:6px;height:9px" viewBox="0 0 6 9"><path d="M0.8,0.6 L5,4.4 L0.8,8.2" fill="none" stroke="#8a8a8a" stroke-width="1.3"/></svg>
<svg style="left:81.1px;top:517px;width:16px;height:13px;"><use href="#fold"/></svg>
<div class="t" style="left:102.40px;top:539.00px;">Music</div>
<svg style="left:81px;top:538px;width:16px;height:16px;"><use href="#music"/></svg>
<div class="t" style="left:102.43px;top:561.00px;transform:scaleX(0.9713);">Pictures</div>
<svg style="left:66.7px;top:564px;width:6px;height:9px" viewBox="0 0 6 9"><path d="M0.8,0.6 L5,4.4 L0.8,8.2" fill="none" stroke="#8a8a8a" stroke-width="1.3"/></svg>
<svg style="left:82px;top:561px;width:14px;height:14px;"><use href="#pic"/></svg>
<div class="t" style="left:103.40px;top:583.00px;transform:scaleX(0.9870);">Videos</div>
<svg style="left:66.7px;top:586px;width:6px;height:9px" viewBox="0 0 6 9"><path d="M0.8,0.6 L5,4.4 L0.8,8.2" fill="none" stroke="#8a8a8a" stroke-width="1.3"/></svg>
<svg style="left:82px;top:583px;width:14px;height:16px;"><use href="#vids"/></svg>
<div class="ab" style="left:51px;top:157px;width:3px;height:39px;background:#1a98d8"></div>
<div class="ab" style="left:51px;top:193px;width:11px;height:3px;background:#1a98d8"></div>
<div class="ab" style="left:68px;top:201px;width:3px;height:83px;background:#1a98d8"></div>
<div class="ab" style="left:68px;top:281px;width:11px;height:3px;background:#1a98d8"></div>
<div class="ab" style="left:86px;top:289px;width:3px;height:17px;background:#1a98d8"></div>
<div class="ab" style="left:86px;top:303px;width:11px;height:3px;background:#1a98d8"></div>
<svg style="left:52px;top:696px;width:15px;height:14px" viewBox="0 0 15 14"><g fill="none" stroke="#5a5e63" stroke-width="1.5"><path d="M0.6,0.5 L5.2,5.1 M5.4,0.4 V5.3 H0.3 M14,0.5 L9.4,5.1 M9.2,0.4 V5.3 H14.3 M0.6,13.5 L5.2,8.9 M5.4,13.6 V8.7 H0.3 M14,13.5 L9.4,8.9 M9.2,13.6 V8.7 H14.3"/></g></svg>
<svg style="left:163px;top:696px;width:16px;height:15px" viewBox="0 0 16 15"><g fill="#5a5e63"><rect x="0" y="0" width="15.5" height="1.5"/><rect x="5" y="4.2" width="10.5" height="1.5"/><rect x="5" y="8.4" width="10.5" height="1.5"/><rect x="0" y="12.8" width="15.5" height="1.5"/><path d="M0.6,7 L3.4,4.6 V9.4 Z"/></g></svg>
<svg style="left:196px;top:696px;width:15px;height:15px" viewBox="0 0 15 15"><g fill="#5a5e63"><rect x="0" y="0" width="4" height="2.6"/><rect x="1.6" y="2.6" width="1.5" height="10"/><rect x="1.6" y="6.4" width="5" height="1.5"/><rect x="1.6" y="11.4" width="5" height="1.5"/><rect x="10" y="5.4" width="5" height="3"/><rect x="10" y="10.6" width="5" height="3"/></g></svg>
<div class="panel" style="left:239px;top:111px;width:840px;height:605px"></div>
<div class="ab" style="left:239px;top:161px;width:830px;height:22px;background:#bde6fc"></div>
<div class="t" style="left:452.82px;top:117.00px;transform:scaleX(0.9765);">Name</div>
<div class="t" style="left:741.40px;top:117.00px;transform:scaleX(0.9679);">Type</div>
<div class="t" style="left:814.08px;top:117.00px;transform:scaleX(0.9250);">Size</div>
<div class="t" style="left:922.60px;top:117.00px;transform:scaleX(0.9976);">LastWrite Time</div>
<div class="ab" style="left:718px;top:111px;width:1px;height:26px;background:#dadde2"></div>
<div class="ab" style="left:790px;top:111px;width:1px;height:26px;background:#dadde2"></div>
<div class="ab" style="left:862px;top:111px;width:1px;height:26px;background:#dadde2"></div>
<div class="ab" style="left:1068px;top:111px;width:1px;height:26px;background:#dadde2"></div>
<svg style="left:495px;top:121px;width:7px;height:5px" viewBox="0 0 7 5"><path d="M0.6,4.4 L3.5,1 L6.4,4.4" fill="none" stroke="#333" stroke-width="1.2"/></svg>
<div class="ab" style="left:257px;top:142px;width:26px;height:16px;background:#9436c9"></div>
<div class="t" style="left:263.00px;top:143.00px;color:#fff;transform:scaleX(0.8643);">01</div>
<div class="t" style="left:312.20px;top:143.00px;transform:scaleX(0.9626);">xxx Budget Estimate Sheet.xlsx</div>
<svg style="left:289px;top:142px;width:16px;height:16px;"><use href="#xl"/></svg>
<div class="t" style="left:741.40px;top:143.00px;color:#8c8c8c;transform:scaleX(0.8545);">XLSX</div>
<div class="t" style="left:822.00px;top:143.00px;color:#8c8c8c;transform:scaleX(0.9342);">9.57 K</div>
<div class="ab" style="left:888px;top:141px;width:34px;height:18px;background:#8b6cfb;border-radius:4px"></div>
<div class="t" style="left:892.00px;top:143.34px;color:#fff;font-size:12px;transform:scaleX(0.8897);font-weight:bold;">Yday</div>
<div class="t" style="left:931.20px;top:143.00px;color:#8c8c8c;transform:scaleX(0.9837);">2024-01-15&nbsp;&nbsp;21:11:12</div>
<div class="t" style="left:263.00px;top:165.00px;color:#8c8c8c;transform:scaleX(0.8643);">02</div>
<div class="t" style="left:312.20px;top:165.00px;transform:scaleX(0.9890);">xxx Solution v1.docx</div>
<svg style="left:289px;top:164px;width:16px;height:16px;"><use href="#wd"/></svg>
<div class="t" style="left:736.34px;top:165.00px;color:#8c8c8c;transform:scaleX(0.9583);">DOCX</div>
<div class="t" style="left:838.60px;top:165.00px;color:#8c8c8c;transform:scaleX(0.9740);">0 B</div>
<div class="ab" style="left:888px;top:163px;width:34px;height:18px;background:#8b6cfb;border-radius:4px"></div>
<div class="t" style="left:892.00px;top:165.34px;color:#fff;font-size:12px;transform:scaleX(0.8897);font-weight:bold;">Yday</div>
<div class="t" style="left:931.20px;top:165.00px;color:#8c8c8c;transform:scaleX(0.9837);">2024-01-15&nbsp;&nbsp;21:11:19</div>
<div class="t" style="left:263.00px;top:187.00px;color:#8c8c8c;transform:scaleX(0.8643);">03</div>
<div class="t" style="left:312.20px;top:187.00px;transform:scaleX(0.9890);">xxx Solution v2.docx</div>
<svg style="left:289px;top:186px;width:16px;height:16px;"><use href="#wd"/></svg>
<div class="t" style="left:736.34px;top:187.00px;color:#8c8c8c;transform:scaleX(0.9583);">DOCX</div>
<div class="t" style="left:838.60px;top:187.00px;color:#8c8c8c;transform:scaleX(0.9740);">0 B</div>
<div class="ab" style="left:888px;top:185px;width:34px;height:18px;background:#8b6cfb;border-radius:4px"></div>
<div class="t" style="left:892.00px;top:187.34px;color:#fff;font-size:12px;transform:scaleX(0.8897);font-weight:bold;">Yday</div>
<div class="t" style="left:931.20px;top:187.00px;color:#8c8c8c;transform:scaleX(0.9837);">2024-01-15&nbsp;&nbsp;21:11:32</div>
<div class="t" style="left:263.00px;top:209.00px;color:#8c8c8c;transform:scaleX(0.8643);">04</div>
<div class="t" style="left:312.20px;top:209.00px;transform:scaleX(0.9890);">xxx Solution v3.docx</div>
<svg style="left:289px;top:208px;width:16px;height:16px;"><use href="#wd"/></svg>
<div class="t" style="left:736.34px;top:209.00px;color:#8c8c8c;transform:scaleX(0.9583);">DOCX</div>
<div class="t" style="left:838.60px;top:209.00px;color:#8c8c8c;transform:scaleX(0.9740);">0 B</div>
<div class="ab" style="left:888px;top:207px;width:34px;height:18px;background:#8b6cfb;border-radius:4px"></div>
<div class="t" style="left:892.00px;top:209.34px;color:#fff;font-size:12px;transform:scaleX(0.8897);font-weight:bold;">Yday</div>
<div class="t" style="left:931.20px;top:209.00px;color:#8c8c8c;transform:scaleX(0.9837);">2024-01-15&nbsp;&nbsp;21:11:37</div>
<svg style="left:438px;top:165px;width:14px;height:14px" viewBox="0 0 14 14"><circle cx="7" cy="7" r="7" fill="#f94a30"/></svg>
<svg style="left:439px;top:187px;width:28px;height:15px" viewBox="0 0 28 15"><rect x="0.6" y="0.6" width="26.8" height="13.8" rx="4.5" fill="#fff" stroke="#555" stroke-width="1.2"/><rect x="1.6" y="1.6" width="15.4" height="11.8" rx="3.6" fill="#9acd32"/></svg>
<svg style="left:440px;top:211px;width:11px;height:11px" viewBox="0 0 11 11"><path d="M0.8,0.8 L10.2,10.2 M10.2,0.8 L0.8,10.2" stroke="#159015" stroke-width="1.4"/><g fill="#159015"><circle cx="5.5" cy="1.6" r="1"/><circle cx="5.5" cy="9.4" r="1"/><circle cx="1.6" cy="5.5" r="1"/><circle cx="9.4" cy="5.5" r="1"/></g></svg>
<svg style="left:943px;top:696px;width:16px;height:14px" viewBox="0 0 16 14"><g fill="#5a5e63"><rect x="0" y="0" width="2" height="1.8"/><rect x="3" y="0" width="13" height="1.8"/><rect x="0" y="4" width="2" height="1.8"/><rect x="3" y="4" width="13" height="1.8"/><rect x="0" y="8" width="2" height="1.8"/><rect x="3" y="8" width="13" height="1.8"/><rect x="0" y="12" width="2" height="1.8"/><rect x="3" y="12" width="13" height="1.8"/></g></svg>
<svg style="left:975px;top:696px;width:16px;height:14px" viewBox="0 0 16 14"><g fill="#5a5e63"><rect x="0" y="0" width="16" height="1.8"/><rect x="0" y="4" width="13" height="1.8"/><rect x="0" y="8" width="10" height="1.8"/><rect x="0" y="12" width="7" height="1.8"/></g></svg>
<svg style="left:1008px;top:694px;width:15px;height:18px" viewBox="0 0 15 18"><path d="M0.9,0.9 H14.1 L8.9,7.2 V16.4 L6.1,13.8 V7.2 Z" fill="none" stroke="#b8b8b8" stroke-width="1.8" stroke-linejoin="miter"/></svg>
<svg style="left:1040px;top:695px;width:14px;height:16px" viewBox="0 0 14 16"><path d="M2,0.8 H6.6 L13,7 V14 Q13,15.2 11.8,15.2 H2.2 Q1,15.2 1,14 V2 Q1,0.8 2,0.8 Z M6.6,1 V6.6 H12.8" fill="none" stroke="#ababab" stroke-width="1.6" stroke-dasharray="1.8 1.1"/></svg>
<div class="ab" style="left:1069px;top:145px;width:8px;height:536px;background:#ececec;border-radius:4px"></div>
<div class="ab" style="left:245px;top:681px;width:823px;height:8px;background:#ebebeb;border-radius:4px"></div>
<div class="ab" style="left:245px;top:681px;width:760px;height:8px;background:#cdcdcd;border-radius:4px"></div>
<div class="t" style="left:249.30px;top:696.00px;transform:scaleX(0.9792);">4 files in total; 1 files have been selected, 0 B</div>
<div class="ab" style="left:716px;top:543px;width:344px;height:145px;background:#fff;border-radius:7px;box-shadow:0 0 0 1px #ababab,0 0 4px 1px rgba(0,0,0,.13);overflow:hidden">
<div class="ab" style="left:0;top:8px;width:345px;height:28px;background:#bde6fc"></div>
<div class="ab" style="left:0;top:100px;width:345px;height:1px;background:#d8d8d8"></div>
</div>
<div class="t" style="left:742.30px;top:558.00px;transform:scaleX(0.9890);">xxx <span style="color:#e0202a">So</span>lution v1.docx</div>
<svg style="left:722px;top:557px;width:16px;height:16px;"><use href="#wd"/></svg>
<div class="t" style="left:742.30px;top:586.00px;transform:scaleX(0.9890);">xxx <span style="color:#e0202a">So</span>lution v2.docx</div>
<svg style="left:722px;top:585px;width:16px;height:16px;"><use href="#wd"/></svg>
<div class="t" style="left:742.30px;top:614.00px;transform:scaleX(0.9890);">xxx <span style="color:#e0202a">So</span>lution v3.docx</div>
<svg style="left:722px;top:613px;width:16px;height:16px;"><use href="#wd"/></svg>
<div class="t" style="left:726.50px;top:658.61px;font-size:17px;">so</div>
<div class="ab" style="left:743px;top:657px;width:1px;height:20px;background:#000"></div>
</body></html>
